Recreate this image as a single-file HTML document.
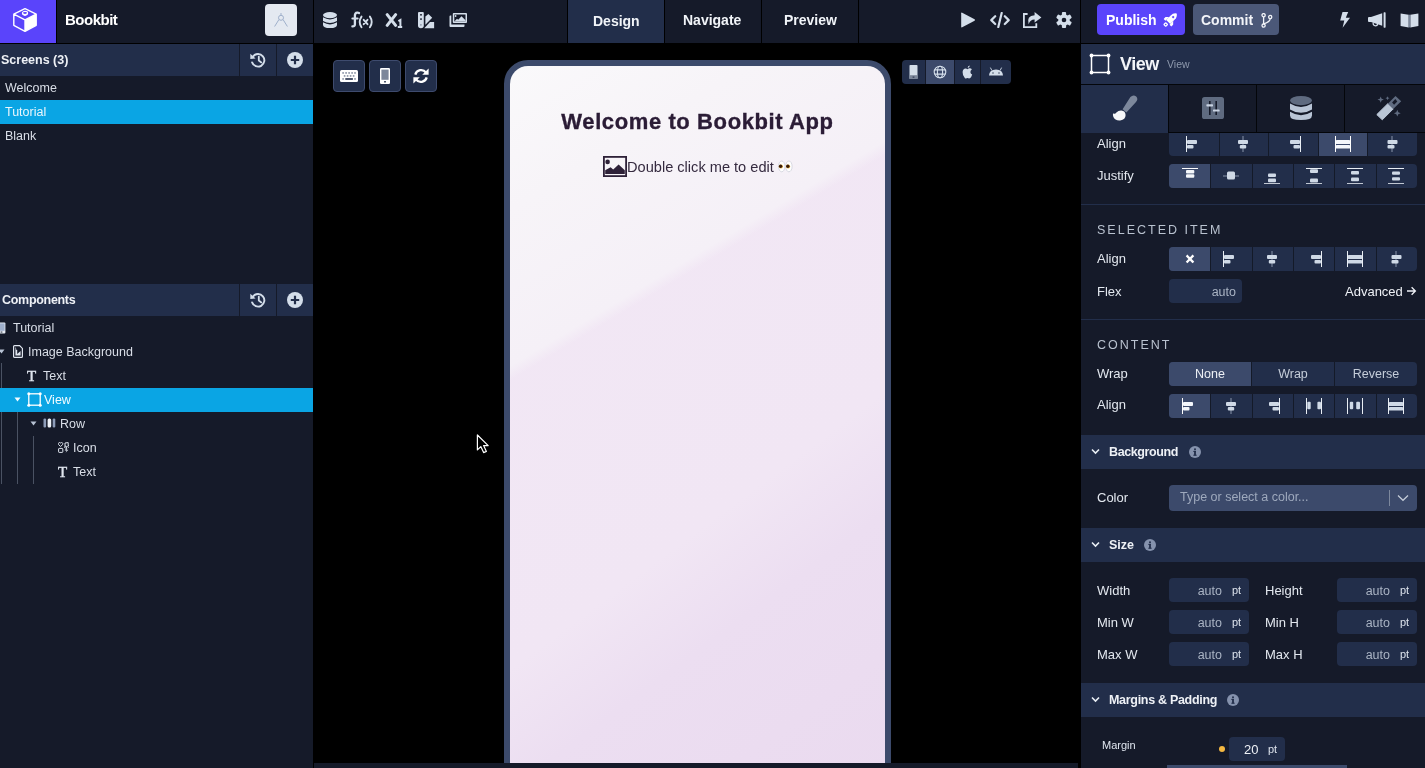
<!DOCTYPE html>
<html><head><meta charset="utf-8">
<style>
*{box-sizing:border-box;margin:0;padding:0}
html,body{width:1425px;height:768px;overflow:hidden;background:#000;font-family:"Liberation Sans",sans-serif;color:#e6ebf2}
.a{position:absolute}
svg{display:block}
#top{left:0;top:0;width:1425px;height:43px;background:#151a29}
#logo{left:0;top:0;width:56px;height:43px;background:#5a44fb}
.vsep{width:1px;background:#000}
.hdr{background:#222e4a}
.txt{white-space:nowrap;line-height:1}
#left{left:0;top:44px;width:313px;height:724px;background:#151a29}
#canvas{left:314px;top:44px;width:767px;height:724px;background:#000}
#right{left:1081px;top:44px;width:344px;height:724px;background:#151a29;overflow:hidden}
.tab{top:0;height:43px;background:#151a29}
.tabtxt{font-weight:bold;font-size:14px;color:#f1f4f8}
.row{font-size:12.5px;color:#d9dee7}
.seg{background:#222e4a;border-radius:4px;overflow:hidden}
.lbl{font-size:13px;color:#e3e8ef}
.sec{font-size:12.5px;letter-spacing:2px;color:#b9c2cf}
.cbtn{width:32px;height:32px;background:#222e4a;border:1px solid #3e4b6e;border-radius:4px}
.inp{background:#222e4a;border-radius:4px}
#root{position:absolute;left:0;top:0;width:1425px;height:768px;overflow:hidden;will-change:transform}
</style></head><body><div id="root">
<!-- TOP BAR -->
<div id="top" class="a"></div>
<div id="logo" class="a"></div>
<div class="a vsep" style="left:56px;top:0;height:43px"></div>
<div class="a txt" style="left:65px;top:12px;font-size:15px;font-weight:bold;color:#fff;letter-spacing:-0.5px">Bookbit</div>
<div class="a" style="left:265px;top:4px;width:32px;height:32px;background:#e4e9f1;border-radius:4px"></div>
<div class="a vsep" style="left:313px;top:0;height:43px"></div>
<div class="a" style="left:0;top:43px;width:1425px;height:1px;background:#000"></div>

<!-- tabs -->
<div class="a vsep" style="left:567px;top:0;height:43px"></div>
<div class="a tab" style="left:568px;width:96px;background:#222e4a"></div>
<div class="a vsep" style="left:664px;top:0;height:43px"></div>
<div class="a vsep" style="left:761px;top:0;height:43px"></div>
<div class="a vsep" style="left:858px;top:0;height:43px"></div>
<div class="a txt tabtxt" style="left:593px;top:14px">Design</div>
<div class="a txt tabtxt" style="left:683px;top:13px">Navigate</div>
<div class="a txt tabtxt" style="left:784px;top:13px">Preview</div>

<div class="a vsep" style="left:1080px;top:0;height:43px"></div>
<div class="a" style="left:1097px;top:4px;width:88px;height:31px;background:#5a44fb;border-radius:4px"></div>
<div class="a txt" style="left:1106px;top:13px;font-size:14px;font-weight:bold;color:#fff">Publish</div>
<div class="a" style="left:1193px;top:4px;width:86px;height:31px;background:#4b5878;border-radius:4px"></div>
<div class="a txt" style="left:1201px;top:13px;font-size:14px;font-weight:bold;color:#f3f5f9">Commit</div>


<!-- logo -->
<svg class="a" style="left:8px;top:4px" width="40" height="32" viewBox="0 0 40 32">
<path d="M17 15.9 L28.2 10.2 L28.2 21.3 L17 27.3 Z" fill="#fff"/>
<path d="M17 4.6 L28.2 10.2 L28.2 21.3 L17 27.3 L5.8 21.3 L5.8 10.2 Z M5.8 10.2 L17 15.9 L28.2 10.2 M17 15.9 L17 27.3" fill="none" stroke="#fff" stroke-width="1.4" stroke-linejoin="round"/>
<ellipse cx="17" cy="9" rx="2.6" ry="1.6" fill="none" stroke="#fff" stroke-width="1.1"/>
<path d="M14.4 9 V10.8 Q17 13 19.6 10.8 V9 Q17 11.2 14.4 9Z" fill="#fff"/>
</svg>
<!-- avatar compass -->
<svg class="a" style="left:265px;top:4px" width="32" height="32" viewBox="0 0 32 32">
<path d="M16 9 V11.3 M13.9 15.6 L9.6 22.5 M18.1 15.6 L22.4 22.5" stroke="#9fb0cb" stroke-width="1" fill="none"/>
<circle cx="16" cy="13.8" r="2.5" fill="none" stroke="#9fb0cb" stroke-width="1"/>
</svg>
<!-- database -->
<svg class="a" style="left:323px;top:12px" width="14" height="16" viewBox="0 0 14 16">
<ellipse cx="7" cy="3.1" rx="7" ry="3.1" fill="#d4deea"/>
<path d="M0 5.3 Q7 9.6 14 5.3 V9 Q7 13.2 0 9 Z" fill="#d4deea"/>
<path d="M0 10.3 Q7 14.6 14 10.3 V12.9 Q14 16 7 16 Q0 16 0 12.9 Z" fill="#d4deea"/>
</svg>
<!-- f(x) -->
<svg class="a" style="left:350px;top:11px" width="24" height="18" viewBox="0 0 24 18">
<path d="M9 2.1 Q8.2 1.6 7.2 1.7 Q4.9 1.9 4.9 4.6 V13.2 Q4.9 15.6 2.4 15.4" fill="none" stroke="#d4deea" stroke-width="2.3" stroke-linecap="round"/>
<path d="M2.4 7.5 H7.6" stroke="#d4deea" stroke-width="2.1" stroke-linecap="round"/>
<path d="M11.5 5.6 Q9.7 8.2 9.7 10.9 Q9.7 13.7 11.5 16.2" fill="none" stroke="#d4deea" stroke-width="1.9" stroke-linecap="round"/>
<path d="M19.9 5.6 Q21.7 8.2 21.7 10.9 Q21.7 13.7 19.9 16.2" fill="none" stroke="#d4deea" stroke-width="1.9" stroke-linecap="round"/>
<path d="M13.7 8.8 L17.5 13.2 M17.5 8.8 L13.7 13.2" stroke="#d4deea" stroke-width="1.9" stroke-linecap="round"/>
</svg>
<!-- X1 -->
<svg class="a" style="left:385px;top:13px" width="18" height="16" viewBox="0 0 18 16">
<path d="M2.2 1.6 L10.6 12.4 M10.6 1.6 L2.2 12.4" stroke="#d4deea" stroke-width="3" stroke-linecap="round"/>
<path d="M13.4 8.2 L15.4 7 V14.2 M12.8 14.1 H17.2" stroke="#d4deea" stroke-width="2" fill="none"/>
</svg>
<!-- swatch -->
<svg class="a" style="left:418px;top:12px" width="17" height="17" viewBox="0 0 17 17">
<path d="M0 1 Q0 0 1 0 H4.8 Q5.8 0 5.8 1 V13.6 Q5.8 16.3 2.9 16.3 Q0 16.3 0 13.6 Z" fill="#d4deea"/>
<rect x="2.2" y="2" width="1.6" height="1.6" fill="#151a29"/>
<rect x="2.2" y="6.3" width="1.6" height="1.6" fill="#151a29"/>
<circle cx="2.9" cy="12.8" r="0.9" fill="#8c97a8"/>
<path d="M7.4 4.4 L10.4 2 L14.2 5.8 L7.4 12.8 Z" fill="#d4deea"/>
<path d="M6.3 16.2 L12 10.1 H16.1 V16.2 Z" fill="#d4deea"/>
</svg>
<!-- images -->
<svg class="a" style="left:449px;top:13px" width="18" height="14" viewBox="0 0 18 14">
<path d="M3.8 0.9 Q3.8 0 4.7 0 H17.1 Q18 0 18 0.9 V9.1 Q18 10 17.1 10 H4.7 Q3.8 10 3.8 9.1 Z M5.3 1.5 V8.5 H16.5 V1.5 Z" fill="#d4deea" fill-rule="evenodd"/>
<circle cx="6.6" cy="3" r="0.9" fill="#d4deea"/>
<path d="M5.3 8.5 L8 5.7 L9.2 6.8 L12.5 3.2 L16.5 7.2 V8.5 Z" fill="#d4deea"/>
<path d="M0.5 3.5 Q0.5 2.6 1.4 2.6 H2.3 V11.6 H15.5 V13 Q15.5 14 14.6 14 H1.4 Q0.5 14 0.5 13.1 Z" fill="#d4deea"/>
</svg>
<!-- play -->
<svg class="a" style="left:960px;top:12px" width="16" height="16" viewBox="0 0 16 16">
<path d="M1.2 1.3 Q1.2 0.2 2.2 0.7 L14.6 7.2 Q15.4 8 14.6 8.8 L2.2 15.3 Q1.2 15.8 1.2 14.7 Z" fill="#d4deea"/>
</svg>
<!-- code -->
<svg class="a" style="left:990px;top:12px" width="20" height="16" viewBox="0 0 20 16">
<path d="M5.2 4.2 L1.3 8.1 L5.2 12 M14.8 4.2 L18.7 8.1 L14.8 12 M11.7 1 L8.3 15" stroke="#d4deea" stroke-width="2.2" fill="none" stroke-linecap="round" stroke-linejoin="round"/>
</svg>
<!-- share -->
<svg class="a" style="left:1023px;top:12px" width="19" height="16" viewBox="0 0 19 16">
<path d="M4.6 2 H0.9 V15.1 H13.3 V11.2" stroke="#d4deea" stroke-width="1.8" fill="none"/>
<path d="M11.6 0 L18.4 5.4 L11.6 10.6 V7.6 Q7.4 7.4 5.6 12.2 Q3.2 3.6 11.6 3.2 Z" fill="#d4deea"/>
</svg>
<!-- gear -->
<svg class="a" style="left:1056px;top:12px" width="16" height="16" viewBox="-8 -8 16 16">
<g fill="#d4deea">
<circle r="5.8"/>
<rect x="-2.1" y="-8" width="4.2" height="16" rx="1"/>
<rect x="-2.1" y="-8" width="4.2" height="16" rx="1" transform="rotate(60)"/>
<rect x="-2.1" y="-8" width="4.2" height="16" rx="1" transform="rotate(120)"/>
</g>
<circle r="2.3" fill="#151a29"/>
</svg>
<!-- rocket -->
<svg class="a" style="left:1158px;top:8px" width="24" height="24" viewBox="0 0 24 24">
<g transform="translate(12.6,11.6) rotate(45)">
<path d="M-2.9 3.4 V-3 Q-2.9 -6.8 0 -8.6 Q2.9 -6.8 2.9 -3 V3.4 Z" fill="#fff"/>
<path d="M-2.9 -0.8 L-5.4 1.8 V4.4 H-2.9 Z M2.9 -0.8 L5.4 1.8 V4.4 H2.9 Z" fill="#fff"/>
<rect x="-1" y="-4.6" width="2" height="2" fill="#5a44fb"/>
<rect x="-1.9" y="5" width="3.8" height="3.8" rx="1" fill="#fff"/>
<circle cx="0" cy="6.9" r="0.8" fill="#5a44fb"/>
</g>
</svg>
<!-- branch -->
<svg class="a" style="left:1261px;top:13px" width="12" height="15" viewBox="0 0 12 15">
<circle cx="2.6" cy="2.2" r="1.6" fill="none" stroke="#f3f5f9" stroke-width="1.3"/>
<circle cx="2.6" cy="12.6" r="1.6" fill="none" stroke="#f3f5f9" stroke-width="1.3"/>
<circle cx="9.2" cy="4" r="1.6" fill="none" stroke="#f3f5f9" stroke-width="1.3"/>
<path d="M2.6 3.8 V11 M9.2 5.6 Q9.2 9 2.8 10.8" fill="none" stroke="#f3f5f9" stroke-width="1.3"/>
</svg>
<!-- bolt -->
<svg class="a" style="left:1339px;top:12px" width="12" height="16" viewBox="0 0 12 16">
<path d="M3.5 0 H9.2 L6.8 5.8 H11 L3.6 15.8 L5.3 8.6 H1.2 Z" fill="#d4deea"/>
</svg>
<!-- megaphone -->
<svg class="a" style="left:1368px;top:12px" width="19" height="16" viewBox="0 0 19 16">
<path d="M0 6 Q0 5 1 5 H3 L14.2 1.3 V13.7 L3 10 H1 Q0 10 0 9 Z" fill="#d4deea"/>
<rect x="15.6" y="0.3" width="2" height="15.4" rx="0.6" fill="#d4deea"/>
<path d="M5.2 10.5 Q4.8 13.8 7.5 13.8 Q9.4 13.8 9.7 11.8" fill="none" stroke="#d4deea" stroke-width="1.3"/>
</svg>
<!-- book -->
<svg class="a" style="left:1400px;top:12px" width="19" height="16" viewBox="0 0 19 16">
<path d="M0.6 1.4 L8.7 2.7 V15.4 L0.6 13.9 Z" fill="#d4deea"/>
<path d="M18.4 1.4 L10.3 2.7 V15.4 L18.4 13.9 Z" fill="#d4deea"/>
<rect x="8.7" y="2.7" width="1.6" height="12.7" fill="#7b879b"/>
</svg>

<!-- LEFT PANEL -->
<div id="left" class="a"></div>
<div class="a hdr" style="left:0;top:44px;width:313px;height:32px"></div>
<div class="a vsep" style="left:239px;top:44px;height:32px;background:#151a29"></div>
<div class="a vsep" style="left:276px;top:44px;height:32px;background:#151a29"></div>
<div class="a txt" style="left:1px;top:54px;font-size:12.5px;font-weight:bold;color:#eef1f6">Screens (3)</div>
<div class="a txt row" style="left:5px;top:82px">Welcome</div>
<div class="a" style="left:0;top:100px;width:313px;height:24px;background:#0aa5e4"></div>
<div class="a txt row" style="left:5px;top:106px;color:#eaf6fc">Tutorial</div>
<div class="a txt row" style="left:5px;top:130px">Blank</div>

<div class="a hdr" style="left:0;top:284px;width:313px;height:32px"></div>
<div class="a vsep" style="left:239px;top:284px;height:32px;background:#151a29"></div>
<div class="a vsep" style="left:276px;top:284px;height:32px;background:#151a29"></div>
<div class="a txt" style="left:2px;top:294px;font-size:12.5px;font-weight:bold;color:#eef1f6;letter-spacing:-0.3px">Components</div>

<svg class="a" style="left:250px;top:52px" width="16" height="16" viewBox="0 0 16 16">
<path d="M3.2 4.3 A6.3 6.3 0 1 1 2.1 10.4" fill="none" stroke="#d4deea" stroke-width="1.9" stroke-linecap="round"/>
<path d="M0.3 1.8 L5.6 6.4 L0.3 6.9 Z" fill="#d4deea"/>
<path d="M8.8 4.6 V8.6 L11.3 10.4" fill="none" stroke="#d4deea" stroke-width="1.8" stroke-linecap="round" stroke-linejoin="round"/>
</svg>
<svg class="a" style="left:287px;top:52px" width="16" height="16" viewBox="0 0 16 16">
<circle cx="8" cy="8" r="8" fill="#d4deea"/>
<path d="M8 3.8 V12.2 M3.8 8 H12.2" stroke="#222e4a" stroke-width="2.2"/>
</svg><svg class="a" style="left:250px;top:292px" width="16" height="16" viewBox="0 0 16 16">
<path d="M3.2 4.3 A6.3 6.3 0 1 1 2.1 10.4" fill="none" stroke="#d4deea" stroke-width="1.9" stroke-linecap="round"/>
<path d="M0.3 1.8 L5.6 6.4 L0.3 6.9 Z" fill="#d4deea"/>
<path d="M8.8 4.6 V8.6 L11.3 10.4" fill="none" stroke="#d4deea" stroke-width="1.8" stroke-linecap="round" stroke-linejoin="round"/>
</svg>
<svg class="a" style="left:287px;top:292px" width="16" height="16" viewBox="0 0 16 16">
<circle cx="8" cy="8" r="8" fill="#d4deea"/>
<path d="M8 3.8 V12.2 M3.8 8 H12.2" stroke="#222e4a" stroke-width="2.2"/>
</svg>
<!-- tree -->
<div class="a" style="left:1px;top:363px;width:1px;height:121px;background:#4a5263"></div>
<div class="a" style="left:0;top:388px;width:313px;height:24px;background:#0aa5e4"></div>
<div class="a" style="left:17px;top:412px;width:1px;height:72px;background:#4a5263"></div>
<div class="a" style="left:33px;top:436px;width:1px;height:48px;background:#4a5263"></div>

<svg class="a" style="left:-3px;top:322px" width="9" height="12" viewBox="0 0 9 12">
<rect x="0.6" y="0.6" width="7.8" height="10.8" rx="1" fill="#e5ebf3"/>
<rect x="1.4" y="1.4" width="6.2" height="7.4" fill="#9fb0cc"/>
<rect x="3.6" y="9.6" width="1.8" height="0.9" fill="#151a29"/>
</svg>
<div class="a txt row" style="left:13px;top:322px">Tutorial</div>

<svg class="a" style="left:-2px;top:349px" width="7" height="5" viewBox="0 0 7 5"><path d="M0.5 0.5 H6.5 L3.5 4.5Z" fill="#b7c2d4"/></svg>
<svg class="a" style="left:13px;top:345px" width="10" height="13" viewBox="0 0 10 13">
<path d="M1.5 0.6 H6.6 L9.4 3.4 V11.4 Q9.4 12.4 8.4 12.4 H1.6 Q0.6 12.4 0.6 11.4 V1.6 Q0.6 0.6 1.5 0.6Z" fill="none" stroke="#dfe5ee" stroke-width="1.2"/>
<path d="M2.4 2 V10.6 H7.6 V6 L4.2 9 V5 Z" fill="#dfe5ee"/>
<circle cx="3.6" cy="4" r="0.8" fill="#151a29"/>
</svg>
<div class="a txt row" style="left:28px;top:346px">Image Background</div>

<div class="a" style="left:27px;top:369px;font-family:'Liberation Serif',serif;font-size:15px;color:#dfe5ee;line-height:1;-webkit-text-stroke:0.45px #dfe5ee">T</div>
<div class="a txt row" style="left:43px;top:370px">Text</div>

<svg class="a" style="left:14px;top:397px" width="7" height="5" viewBox="0 0 7 5"><path d="M0.5 0.5 H6.5 L3.5 4.5Z" fill="#f2fbff"/></svg>
<svg class="a" style="left:27px;top:392px" width="15" height="15" viewBox="0 0 15 15">
<rect x="1.8" y="1.8" width="11.4" height="11.4" fill="none" stroke="#fff" stroke-width="1.3"/>
<circle cx="1.8" cy="1.8" r="1.5" fill="#fff"/><circle cx="13.2" cy="1.8" r="1.5" fill="#fff"/>
<circle cx="1.8" cy="13.2" r="1.5" fill="#fff"/><circle cx="13.2" cy="13.2" r="1.5" fill="#fff"/>
</svg>
<div class="a txt row" style="left:44px;top:394px;color:#f2fbff">View</div>

<svg class="a" style="left:30px;top:421px" width="7" height="5" viewBox="0 0 7 5"><path d="M0.5 0.5 H6.5 L3.5 4.5Z" fill="#b7c2d4"/></svg>
<svg class="a" style="left:43px;top:418px" width="13" height="10" viewBox="0 0 13 10">
<rect x="0.5" y="0.5" width="2.6" height="9" rx="1.1" fill="#8d9cb8"/>
<rect x="4.6" y="0.5" width="3.6" height="9" rx="1.5" fill="#eef2f7"/>
<rect x="9.7" y="0.5" width="2.6" height="9" rx="1.1" fill="#8d9cb8"/>
</svg>
<div class="a txt row" style="left:60px;top:418px">Row</div>

<svg class="a" style="left:58px;top:442px" width="11" height="11" viewBox="0 0 11 11">
<path d="M2.6 4.5 L0.6 2.6 Q0 1.6 0.8 0.8 Q1.8 0 2.6 1 Q3.4 0 4.4 0.8 Q5.2 1.6 4.6 2.6 Z" fill="none" stroke="#dfe5ee" stroke-width="1"/>
<path d="M7 4.6 V1 L10.2 0.6 V3.6 M7 4.3 A1 1 0 1 1 6.9 4.4 M10.2 3.6 A1 1 0 1 1 10.1 3.7" fill="none" stroke="#dfe5ee" stroke-width="1"/>
<rect x="0.6" y="6.4" width="4.2" height="4" rx="0.6" fill="none" stroke="#dfe5ee" stroke-width="1"/>
<path d="M8.6 6 L6.6 8.6 H8.6 L7.6 10.8 L10.4 7.8 H8.6 L9.4 6Z" fill="#dfe5ee"/>
</svg>
<div class="a txt row" style="left:73px;top:442px">Icon</div>

<div class="a" style="left:58px;top:465px;font-family:'Liberation Serif',serif;font-size:15px;color:#dfe5ee;line-height:1;-webkit-text-stroke:0.45px #dfe5ee">T</div>
<div class="a txt row" style="left:73px;top:466px">Text</div>

<!-- CANVAS -->
<div id="canvas" class="a"></div>


<!-- canvas buttons -->
<div class="a cbtn" style="left:333px;top:60px"></div>
<div class="a cbtn" style="left:369px;top:60px"></div>
<div class="a cbtn" style="left:405px;top:60px"></div>
<svg class="a" style="left:340px;top:70px" width="18" height="12" viewBox="0 0 18 12">
<rect x="0" y="0" width="18" height="12" rx="1.5" fill="#fff"/>
<g fill="#7c879b"><rect x="2.3" y="2.2" width="1.6" height="1.5"/><rect x="5.3" y="2.2" width="1.6" height="1.5"/><rect x="8.3" y="2.2" width="1.6" height="1.5"/><rect x="11.3" y="2.2" width="1.6" height="1.5"/><rect x="14.2" y="2.2" width="1.6" height="1.5"/>
<rect x="3.8" y="5.2" width="1.6" height="1.5"/><rect x="6.8" y="5.2" width="1.6" height="1.5"/><rect x="9.8" y="5.2" width="1.6" height="1.5"/><rect x="12.8" y="5.2" width="1.6" height="1.5"/>
<rect x="2.3" y="8.2" width="1.6" height="1.5"/><rect x="14.2" y="8.2" width="1.6" height="1.5"/></g>
<rect x="5.3" y="8.2" width="7.6" height="1.6" fill="#222e4a"/>
</svg>
<svg class="a" style="left:380px;top:68px" width="10" height="16" viewBox="0 0 10 16">
<rect x="0" y="0" width="10" height="16" rx="1.3" fill="#fff"/>
<rect x="1.4" y="1.6" width="7.2" height="10.2" fill="#7c879b"/>
<rect x="4.2" y="13" width="1.6" height="1.5" fill="#222e4a"/>
</svg>
<svg class="a" style="left:413px;top:68px" width="16" height="16" viewBox="0 0 16 16">
<path d="M2.3 6.6 A6 6 0 0 1 13 4.6" fill="none" stroke="#fff" stroke-width="2.3"/>
<path d="M15.6 0.4 V6.8 H9.2 Z" fill="#fff"/>
<path d="M13.7 9.4 A6 6 0 0 1 3 11.4" fill="none" stroke="#fff" stroke-width="2.3"/>
<path d="M0.4 15.6 V9.2 H6.8 Z" fill="#fff"/>
</svg>

<!-- phone -->
<div class="a" style="left:504px;top:60px;width:387px;height:740px;border:6px solid #3c4a6b;border-radius:24px;background:#3c4a6b"></div>
<div class="a" id="screen" style="left:510px;top:66px;width:375px;height:728px;border-radius:18px 18px 0 0;overflow:hidden;background:linear-gradient(149deg,#faf9fb 0%,#f7f4f8 15%,#f5f0f7 31.5%,rgba(242,232,245,0) 33%),linear-gradient(143.5deg,#f2e8f5 0%,#f1e6f4 60%,#ecdef1 72%,#eadaef 100%)">
<div class="a txt" style="left:0;width:375px;top:45px;text-align:center;font-size:22px;letter-spacing:0.6px;font-weight:bold;color:#2b1c36;-webkit-text-stroke:0.35px #2b1c36">Welcome to Bookbit App</div>
</div>
<svg class="a" style="left:603px;top:156px" width="24" height="21" viewBox="0 0 24 21">
<rect x="0.9" y="0.9" width="22.2" height="19.2" fill="none" stroke="#2e2138" stroke-width="1.8"/>
<circle cx="4.6" cy="5.9" r="2.3" fill="#2e2138"/>
<path d="M2.2 18 V14.2 L7.6 11.2 L10.2 13.4 L15.6 8.4 L21.8 14.2 V18 Z" fill="#2e2138"/>
</svg>
<div class="a txt" style="left:627px;top:160px;font-size:14.6px;color:#352a3f">Double click me to edit</div>
<svg class="a" style="left:778px;top:160px" width="16" height="13" viewBox="0 0 16 13">
<ellipse cx="3.7" cy="6.4" rx="3.2" ry="5.4" fill="#fff" stroke="#c8ccd6" stroke-width="0.7"/>
<ellipse cx="10.9" cy="6.4" rx="3.2" ry="5.4" fill="#fff" stroke="#c8ccd6" stroke-width="0.7"/>
<circle cx="2.9" cy="6.5" r="2.1" fill="#e8b84a"/><circle cx="2.6" cy="6.2" r="1.7" fill="#3a1c08"/>
<circle cx="10.1" cy="6.5" r="2.1" fill="#e8b84a"/><circle cx="9.8" cy="6.2" r="1.7" fill="#3a1c08"/>
</svg>

<!-- platform switcher -->
<div class="a" style="left:902px;top:60px;width:109px;height:24px;background:#222e4a;border-radius:4px;overflow:hidden">
<div class="a" style="left:23px;top:0;width:1px;height:24px;background:#151a29"></div>
<div class="a" style="left:24px;top:0;width:28px;height:24px;background:#3c4a6b"></div>
<div class="a" style="left:52px;top:0;width:1px;height:24px;background:#151a29"></div>
<div class="a" style="left:78px;top:0;width:1px;height:24px;background:#151a29"></div>
</div>
<svg class="a" style="left:909px;top:65px" width="9" height="14" viewBox="0 0 9 14">
<rect x="0.5" y="0" width="8" height="14" rx="0.8" fill="#d4deea"/>
<rect x="0.5" y="10.2" width="8" height="3.8" fill="#7c879b"/>
<rect x="3.6" y="11.6" width="1.8" height="1" fill="#222e4a"/>
</svg>
<svg class="a" style="left:933px;top:65px" width="14" height="14" viewBox="0 0 14 14">
<g fill="none" stroke="#d4deea" stroke-width="1.1">
<circle cx="7" cy="7" r="5.8"/><ellipse cx="7" cy="7" rx="2.6" ry="5.8"/>
<path d="M1.6 4.9 H12.4 M1.6 9.1 H12.4"/></g>
</svg>
<svg class="a" style="left:962px;top:65px" width="11" height="14" viewBox="0 0 11 14">
<path d="M5.5 4.2 Q7.2 2.6 9 3.6 Q9.6 4 9.8 4.4 Q8.2 5.3 8.4 7.2 Q8.6 8.9 10.2 9.5 Q9.4 12 8.2 13 Q7.4 13.7 6.4 13.3 Q5.5 12.9 4.6 13.3 Q3.6 13.7 2.8 12.9 Q0.4 10.4 0.6 7.1 Q0.9 3.5 3.6 3.5 Q4.6 3.6 5.5 4.2Z" fill="#d4deea"/>
<path d="M5.6 3.1 Q5.7 0.9 7.8 0.5 Q7.7 2.7 5.6 3.1Z" fill="#d4deea"/>
</svg>
<svg class="a" style="left:988px;top:66px" width="16" height="12" viewBox="0 0 16 12">
<path d="M1 9.6 Q1.3 3.4 8 3.4 Q14.7 3.4 15 9.6 Z" fill="#d4deea"/>
<path d="M3.8 4.4 L2.4 1.6 M12.2 4.4 L13.6 1.6" stroke="#d4deea" stroke-width="0.9"/>
<circle cx="5" cy="7" r="0.7" fill="#222e4a"/><circle cx="11" cy="7" r="0.7" fill="#222e4a"/>
</svg>

<!-- cursor -->
<svg class="a" style="left:475px;top:433px" width="16" height="22" viewBox="0 0 16 22">
<path d="M2.4 2 V16.9 L5.8 13.6 L8.6 19.6 L11.4 18.4 L8.6 12.6 H13.2 Z" fill="#000" stroke="#fff" stroke-width="1.2" stroke-linejoin="round"/>
</svg>

<!-- RIGHT PANEL -->
<div id="right" class="a"></div>
<!-- RSTART -->
<div class="a hdr" style="left:1081px;top:44px;width:344px;height:40px"></div>
<div class="a" style="left:1081px;top:84px;width:344px;height:1px;background:#04060a"></div>
<svg class="a" style="left:1089px;top:53px" width="22" height="22" viewBox="0 0 22 22">
<rect x="2.5" y="2.5" width="17" height="17" fill="none" stroke="#fff" stroke-width="1.5"/>
<circle cx="2.5" cy="2.5" r="1.9" fill="#fff"/><circle cx="19.5" cy="2.5" r="1.9" fill="#fff"/>
<circle cx="2.5" cy="19.5" r="1.9" fill="#fff"/><circle cx="19.5" cy="19.5" r="1.9" fill="#fff"/></svg>
<div class="a txt" style="left:1120px;top:55px;font-size:18px;font-weight:bold;color:#f3f5f9;letter-spacing:-0.5px">View</div>
<div class="a txt" style="left:1167px;top:59px;font-size:10.5px;color:#8e99ad">View</div>
<div class="a" style="left:1081px;top:85px;width:87px;height:48px;background:#222e4a"></div>
<div class="a" style="left:1168px;top:85px;width:1px;height:48px;background:#04060a"></div>
<div class="a" style="left:1256px;top:85px;width:1px;height:48px;background:#04060a"></div>
<div class="a" style="left:1344px;top:85px;width:1px;height:48px;background:#04060a"></div>
<div class="a" style="left:1169px;top:132px;width:256px;height:1px;background:#04060a"></div>
<svg class="a" style="left:1105px;top:90px" width="40" height="35" viewBox="0 0 40 35">
<path d="M25.4 7 Q28.4 4 31.2 6.6 Q33.6 9.2 31 12 L21.4 22.4 L17.6 19.2 Z" fill="#7d889c"/>
<path d="M8 23.2 Q9.8 24.8 11.4 22.6 Q13.4 20.2 16.4 20.4 Q20.4 20.8 20.6 25 Q20.6 29.8 15.2 30.4 Q10 30.8 8.4 27 Q7.7 25.1 8 23.2Z" fill="#f6f7f9"/>
</svg>
<svg class="a" style="left:1202px;top:97px" width="22" height="22" viewBox="0 0 22 22">
<rect x="0" y="0" width="22" height="22" rx="2.6" fill="#5f6b80"/>
<rect x="7" y="4" width="1.6" height="14" fill="#151a29"/>
<rect x="13.4" y="4" width="1.6" height="14" fill="#151a29"/>
<rect x="4.4" y="7.2" width="6.6" height="2.2" rx="0.6" fill="#c9d3e2"/>
<rect x="11" y="12.4" width="6.6" height="2.2" rx="0.6" fill="#c9d3e2"/>
</svg>
<svg class="a" style="left:1290px;top:96px" width="22" height="24" viewBox="0 0 22 24">
<ellipse cx="11" cy="4.6" rx="11" ry="4.6" fill="#5f6b80"/>
<path d="M0 7.6 Q11 14.4 22 7.6 V13.4 Q11 20.2 0 13.4Z" fill="#b9c5d6"/>
<path d="M0 15.8 Q11 22.6 22 15.8 V19.4 Q22 24 11 24 Q0 24 0 19.4Z" fill="#b9c5d6"/>
</svg>
<svg class="a" style="left:1370px;top:90px" width="40" height="35" viewBox="0 0 40 35">
<path d="M6.8 24.6 L12.3 29.8 L23.2 18.9 L17.8 13.7 Z" fill="#bac6d6" stroke="#bac6d6" stroke-width="1" stroke-linejoin="round"/>
<path d="M17.8 13.7 L23.2 18.9 L31.2 11.2 L25.5 5.9 Z M22.1 12.5 L24.1 14.8 L27.3 11.6 L25.3 9.1 Z" fill="#5f6b80" fill-rule="evenodd"/>
<path d="M10.7 6.4 L11.6 8.7 L13.9 9.6 L11.6 10.5 L10.7 12.8 L9.8 10.5 L7.5 9.6 L9.8 8.7Z" fill="#5f6b80"/>
<path d="M17.5 6.2 L18.1 7.6 L19.5 8.2 L18.1 8.8 L17.5 10.2 L16.9 8.8 L15.5 8.2 L16.9 7.6Z" fill="#5f6b80"/>
<path d="M27.3 19.8 L28.3 22.2 L30.7 23.2 L28.3 24.2 L27.3 26.6 L26.3 24.2 L23.9 23.2 L26.3 22.2Z" fill="#5f6b80"/>
</svg>
<div class="a txt lbl" style="left:1097px;top:137px;">Align</div>
<div class="a" style="left:1169px;top:133px;width:248px;height:23px;background:#222e4a;border-radius:0 0 4px 4px;overflow:hidden">
<div class="a" style="left:50px;top:0;width:1px;height:23px;background:#141a28"></div>
<div class="a" style="left:99px;top:0;width:1px;height:23px;background:#141a28"></div>
<div class="a" style="left:149px;top:0;width:49px;height:23px;background:#3c4a6b"></div>
<div class="a" style="left:149px;top:0;width:1px;height:23px;background:#141a28"></div>
<div class="a" style="left:198px;top:0;width:1px;height:23px;background:#141a28"></div>
</div>
<svg class="a" style="left:1185.8px;top:135.6px" width="16" height="16" viewBox="0 0 16 16"><rect x="0" y="0" width="1" height="16" rx="0" fill="#e9eef4"/><rect x="1" y="4" width="10" height="4" rx="1" fill="#cfd9e6"/><rect x="1" y="9" width="6.5" height="3.6" rx="1" fill="#cfd9e6"/></svg>
<svg class="a" style="left:1235.4px;top:135.6px" width="16" height="16" viewBox="0 0 16 16"><rect x="7.5" y="0" width="1" height="16" rx="0" fill="#8894aa"/><rect x="3" y="4" width="10" height="4" rx="1" fill="#cfd9e6"/><rect x="4.8" y="9" width="6.4" height="3.6" rx="1" fill="#cfd9e6"/></svg>
<svg class="a" style="left:1285.0px;top:135.6px" width="16" height="16" viewBox="0 0 16 16"><rect x="15" y="0" width="1" height="16" rx="0" fill="#e9eef4"/><rect x="5" y="4" width="10" height="4" rx="1" fill="#cfd9e6"/><rect x="8.5" y="9" width="6.5" height="3.6" rx="1" fill="#cfd9e6"/></svg>
<svg class="a" style="left:1334.6px;top:135.6px" width="16" height="16" viewBox="0 0 16 16"><rect x="0" y="0" width="1" height="16" rx="0" fill="#ffffff"/><rect x="15" y="0" width="1" height="16" rx="0" fill="#ffffff"/><rect x="1" y="4" width="14" height="4" rx="0.5" fill="#f4f7fb"/><rect x="1" y="9" width="14" height="3.6" rx="0.5" fill="#f4f7fb"/></svg>
<svg class="a" style="left:1384.2px;top:135.6px" width="16" height="16" viewBox="0 0 16 16"><rect x="7.5" y="0" width="1" height="16" rx="0" fill="#8894aa"/><rect x="3.5" y="4" width="10" height="4" rx="1" fill="#cfd9e6"/><rect x="3.5" y="9" width="7" height="3.6" rx="1" fill="#cfd9e6"/></svg>
<div class="a txt lbl" style="left:1097px;top:169px;">Justify</div>
<div class="a" style="left:1169px;top:164px;width:248px;height:24px;background:#222e4a;border-radius:4px;overflow:hidden">
<div class="a" style="left:0px;top:0;width:41px;height:24px;background:#3c4a6b"></div>
<div class="a" style="left:41px;top:0;width:1px;height:24px;background:#141a28"></div>
<div class="a" style="left:83px;top:0;width:1px;height:24px;background:#141a28"></div>
<div class="a" style="left:124px;top:0;width:1px;height:24px;background:#141a28"></div>
<div class="a" style="left:165px;top:0;width:1px;height:24px;background:#141a28"></div>
<div class="a" style="left:207px;top:0;width:1px;height:24px;background:#141a28"></div>
</div>
<svg class="a" style="left:1181.7px;top:168.0px" width="16" height="16" viewBox="0 0 16 16"><rect x="0" y="0" width="16" height="1" rx="0" fill="#ffffff"/><rect x="4" y="2" width="8.3" height="3.4" rx="1" fill="#f4f7fb"/><rect x="4" y="6.3" width="8.3" height="3.5" rx="1" fill="#f4f7fb"/></svg>
<svg class="a" style="left:1223.0px;top:168.0px" width="16" height="16" viewBox="0 0 16 16"><rect x="0" y="7.5" width="16" height="1" rx="0" fill="#8894aa"/><rect x="4" y="3.5" width="8" height="8" rx="1.5" fill="#cfd9e6"/></svg>
<svg class="a" style="left:1264.3px;top:168.0px" width="16" height="16" viewBox="0 0 16 16"><rect x="0" y="15.2" width="16" height="1" rx="0" fill="#e9eef4"/><rect x="4" y="5.5" width="8" height="3.6" rx="1" fill="#cfd9e6"/><rect x="4" y="10.5" width="8" height="3.8" rx="1" fill="#cfd9e6"/></svg>
<svg class="a" style="left:1305.7px;top:168.0px" width="16" height="16" viewBox="0 0 16 16"><rect x="0" y="0" width="16" height="1" rx="0" fill="#e9eef4"/><rect x="0" y="15.2" width="16" height="1" rx="0" fill="#e9eef4"/><rect x="4" y="1.2" width="8" height="3.8" rx="1" fill="#cfd9e6"/><rect x="4" y="10.6" width="8" height="3.8" rx="1" fill="#cfd9e6"/></svg>
<svg class="a" style="left:1347.0px;top:168.0px" width="16" height="16" viewBox="0 0 16 16"><rect x="0" y="0" width="16" height="1" rx="0" fill="#e9eef4"/><rect x="0" y="15.2" width="16" height="1" rx="0" fill="#e9eef4"/><rect x="4" y="3" width="8" height="3.4" rx="1" fill="#cfd9e6"/><rect x="4" y="9.6" width="8" height="3.6" rx="1" fill="#cfd9e6"/></svg>
<svg class="a" style="left:1388.3px;top:168.0px" width="16" height="16" viewBox="0 0 16 16"><rect x="0" y="0" width="16" height="1" rx="0" fill="#e9eef4"/><rect x="0" y="15.2" width="16" height="1" rx="0" fill="#e9eef4"/><rect x="4" y="3.4" width="8" height="3.4" rx="1" fill="#cfd9e6"/><rect x="4" y="9.2" width="8" height="3.4" rx="1" fill="#cfd9e6"/></svg>
<div class="a" style="left:1081px;top:204px;width:344px;height:1px;background:#222e4a"></div>
<div class="a txt sec" style="left:1097px;top:224px">SELECTED ITEM</div>
<div class="a txt lbl" style="left:1097px;top:252px;">Align</div>
<div class="a" style="left:1169px;top:247px;width:248px;height:24px;background:#222e4a;border-radius:4px;overflow:hidden">
<div class="a" style="left:0px;top:0;width:41px;height:24px;background:#3c4a6b"></div>
<div class="a" style="left:41px;top:0;width:1px;height:24px;background:#141a28"></div>
<div class="a" style="left:83px;top:0;width:1px;height:24px;background:#141a28"></div>
<div class="a" style="left:124px;top:0;width:1px;height:24px;background:#141a28"></div>
<div class="a" style="left:165px;top:0;width:1px;height:24px;background:#141a28"></div>
<div class="a" style="left:207px;top:0;width:1px;height:24px;background:#141a28"></div>
</div>
<svg class="a" style="left:1181.7px;top:251.0px" width="16" height="16" viewBox="0 0 16 16"><path d="M5.4 5.2 L10.6 10.6 M10.6 5.2 L5.4 10.6" stroke="#fff" stroke-width="2.3" stroke-linecap="square"/></svg>
<svg class="a" style="left:1223.0px;top:251.0px" width="16" height="16" viewBox="0 0 16 16"><rect x="0" y="0" width="1" height="16" rx="0" fill="#e9eef4"/><rect x="1" y="4" width="10" height="4" rx="1" fill="#cfd9e6"/><rect x="1" y="9" width="6.5" height="3.6" rx="1" fill="#cfd9e6"/></svg>
<svg class="a" style="left:1264.3px;top:251.0px" width="16" height="16" viewBox="0 0 16 16"><rect x="7.5" y="0" width="1" height="16" rx="0" fill="#8894aa"/><rect x="3" y="4" width="10" height="4" rx="1" fill="#cfd9e6"/><rect x="4.8" y="9" width="6.4" height="3.6" rx="1" fill="#cfd9e6"/></svg>
<svg class="a" style="left:1305.7px;top:251.0px" width="16" height="16" viewBox="0 0 16 16"><rect x="15" y="0" width="1" height="16" rx="0" fill="#e9eef4"/><rect x="5" y="4" width="10" height="4" rx="1" fill="#cfd9e6"/><rect x="8.5" y="9" width="6.5" height="3.6" rx="1" fill="#cfd9e6"/></svg>
<svg class="a" style="left:1347.0px;top:251.0px" width="16" height="16" viewBox="0 0 16 16"><rect x="0" y="0" width="1" height="16" rx="0" fill="#e9eef4"/><rect x="15" y="0" width="1" height="16" rx="0" fill="#e9eef4"/><rect x="1" y="4" width="14" height="4" rx="0.5" fill="#cfd9e6"/><rect x="1" y="9" width="14" height="3.6" rx="0.5" fill="#cfd9e6"/></svg>
<svg class="a" style="left:1388.3px;top:251.0px" width="16" height="16" viewBox="0 0 16 16"><rect x="7.5" y="0" width="1" height="16" rx="0" fill="#8894aa"/><rect x="3.5" y="4" width="10" height="4" rx="1" fill="#cfd9e6"/><rect x="3.5" y="9" width="7" height="3.6" rx="1" fill="#cfd9e6"/></svg>
<div class="a txt lbl" style="left:1097px;top:285px;">Flex</div>
<div class="a inp" style="left:1169px;top:279px;width:73px;height:24px"></div><div class="a txt" style="left:1169px;width:67px;top:286px;text-align:right;font-size:12.5px;color:#aab4c4">auto</div>
<div class="a txt lbl" style="left:1345px;top:285px;color:#eef1f6">Advanced</div>
<svg class="a" style="left:1406px;top:286px" width="11" height="10" viewBox="0 0 11 10"><path d="M1 5 H9.4 M5.6 1.2 L9.4 5 L5.6 8.8" fill="none" stroke="#eef1f6" stroke-width="1.3"/></svg>
<div class="a" style="left:1081px;top:319px;width:344px;height:1px;background:#222e4a"></div>
<div class="a txt sec" style="left:1097px;top:339px">CONTENT</div>
<div class="a txt lbl" style="left:1097px;top:367px;">Wrap</div>
<div class="a seg" style="left:1169px;top:362px;width:248px;height:24px"><div class="a" style="left:0;top:0;width:82px;height:24px;background:#3c4a6b"></div><div class="a" style="left:82px;top:0;width:1px;height:24px;background:#141a28"></div><div class="a" style="left:165px;top:0;width:1px;height:24px;background:#141a28"></div></div>
<div class="a txt" style="left:1169px;width:82px;top:368px;text-align:center;font-size:12.5px;color:#eef1f6">None</div>
<div class="a txt" style="left:1252px;width:82px;top:368px;text-align:center;font-size:12.5px;color:#c5cdd9">Wrap</div>
<div class="a txt" style="left:1335px;width:82px;top:368px;text-align:center;font-size:12.5px;color:#c5cdd9">Reverse</div>
<div class="a txt lbl" style="left:1097px;top:398px;">Align</div>
<div class="a" style="left:1169px;top:394px;width:248px;height:24px;background:#222e4a;border-radius:4px;overflow:hidden">
<div class="a" style="left:0px;top:0;width:41px;height:24px;background:#3c4a6b"></div>
<div class="a" style="left:41px;top:0;width:1px;height:24px;background:#141a28"></div>
<div class="a" style="left:83px;top:0;width:1px;height:24px;background:#141a28"></div>
<div class="a" style="left:124px;top:0;width:1px;height:24px;background:#141a28"></div>
<div class="a" style="left:165px;top:0;width:1px;height:24px;background:#141a28"></div>
<div class="a" style="left:207px;top:0;width:1px;height:24px;background:#141a28"></div>
</div>
<svg class="a" style="left:1181.7px;top:398.0px" width="16" height="16" viewBox="0 0 16 16"><rect x="0" y="0" width="1" height="16" rx="0" fill="#ffffff"/><rect x="1" y="4" width="10" height="4" rx="1" fill="#f4f7fb"/><rect x="1" y="9" width="6.5" height="3.6" rx="1" fill="#f4f7fb"/></svg>
<svg class="a" style="left:1223.0px;top:398.0px" width="16" height="16" viewBox="0 0 16 16"><rect x="7.5" y="0" width="1" height="16" rx="0" fill="#8894aa"/><rect x="3" y="4" width="10" height="4" rx="1" fill="#cfd9e6"/><rect x="4.8" y="9" width="6.4" height="3.6" rx="1" fill="#cfd9e6"/></svg>
<svg class="a" style="left:1264.3px;top:398.0px" width="16" height="16" viewBox="0 0 16 16"><rect x="15" y="0" width="1" height="16" rx="0" fill="#e9eef4"/><rect x="5" y="4" width="10" height="4" rx="1" fill="#cfd9e6"/><rect x="8.5" y="9" width="6.5" height="3.6" rx="1" fill="#cfd9e6"/></svg>
<svg class="a" style="left:1305.7px;top:398.0px" width="16" height="16" viewBox="0 0 16 16"><rect x="0" y="0" width="1" height="16" rx="0" fill="#e9eef4"/><rect x="15" y="0" width="1" height="16" rx="0" fill="#e9eef4"/><rect x="1.3" y="3.8" width="3.4" height="7.4" rx="1" fill="#cfd9e6"/><rect x="11.4" y="3.8" width="3.6" height="7.4" rx="1" fill="#cfd9e6"/></svg>
<svg class="a" style="left:1347.0px;top:398.0px" width="16" height="16" viewBox="0 0 16 16"><rect x="0" y="0" width="1" height="16" rx="0" fill="#e9eef4"/><rect x="15" y="0" width="1" height="16" rx="0" fill="#e9eef4"/><rect x="2.8" y="3.8" width="3.4" height="7.4" rx="1" fill="#cfd9e6"/><rect x="9.2" y="3.8" width="3.8" height="7.4" rx="1" fill="#cfd9e6"/></svg>
<svg class="a" style="left:1388.3px;top:398.0px" width="16" height="16" viewBox="0 0 16 16"><rect x="0" y="0" width="1" height="16" rx="0" fill="#e9eef4"/><rect x="15" y="0" width="1" height="16" rx="0" fill="#e9eef4"/><rect x="1" y="4" width="14" height="4" rx="0.5" fill="#cfd9e6"/><rect x="1" y="9" width="14" height="3.6" rx="0.5" fill="#cfd9e6"/></svg>
<div class="a hdr" style="left:1081px;top:435px;width:344px;height:34px"></div><svg class="a" style="left:1091px;top:448px" width="9" height="7" viewBox="0 0 9 7"><path d="M1 1.5 L4.5 5 L8 1.5" fill="none" stroke="#e9eef4" stroke-width="1.6"/></svg><div class="a txt" style="left:1109px;top:446px;font-size:12.5px;font-weight:bold;color:#eef1f6"><span style="letter-spacing:-0.4px">Background</span></div>
<svg class="a" style="left:1189px;top:446px" width="12" height="12" viewBox="0 0 12 12"><circle cx="6" cy="6" r="6" fill="#8592ad"/><circle cx="6" cy="3.2" r="1" fill="#222e4a"/><rect x="5.1" y="4.9" width="1.8" height="4.6" fill="#222e4a"/><rect x="4.3" y="4.9" width="2.6" height="1" fill="#222e4a"/><rect x="4.3" y="8.7" width="3.4" height="1" fill="#222e4a"/></svg>
<div class="a txt lbl" style="left:1097px;top:491px;">Color</div>
<div class="a" style="left:1169px;top:485px;width:248px;height:26px;background:#3c4a6b;border-radius:4px"></div>
<div class="a txt" style="left:1180px;top:491px;font-size:12.5px;color:#9ea9bd">Type or select a color...</div>
<div class="a" style="left:1389px;top:490px;width:1px;height:16px;background:#7d889d"></div>
<svg class="a" style="left:1397px;top:494px" width="12" height="8" viewBox="0 0 12 8"><path d="M1 1.5 L6 6.3 L11 1.5" fill="none" stroke="#c5cdd9" stroke-width="1.2"/></svg>
<div class="a hdr" style="left:1081px;top:528px;width:344px;height:34px"></div><svg class="a" style="left:1091px;top:541px" width="9" height="7" viewBox="0 0 9 7"><path d="M1 1.5 L4.5 5 L8 1.5" fill="none" stroke="#e9eef4" stroke-width="1.6"/></svg><div class="a txt" style="left:1109px;top:539px;font-size:12.5px;font-weight:bold;color:#eef1f6">Size</div>
<svg class="a" style="left:1144px;top:539px" width="12" height="12" viewBox="0 0 12 12"><circle cx="6" cy="6" r="6" fill="#8592ad"/><circle cx="6" cy="3.2" r="1" fill="#222e4a"/><rect x="5.1" y="4.9" width="1.8" height="4.6" fill="#222e4a"/><rect x="4.3" y="4.9" width="2.6" height="1" fill="#222e4a"/><rect x="4.3" y="8.7" width="3.4" height="1" fill="#222e4a"/></svg>
<div class="a txt lbl" style="left:1097px;top:584px;">Width</div>
<div class="a inp" style="left:1169px;top:578px;width:80px;height:24px"></div><div class="a txt" style="left:1169px;width:53px;top:585px;text-align:right;font-size:12.5px;color:#aab4c4">auto</div><div class="a txt" style="left:1232px;top:585px;font-size:11px;color:#dde3ec">pt</div>
<div class="a txt lbl" style="left:1265px;top:584px;">Height</div>
<div class="a inp" style="left:1337px;top:578px;width:80px;height:24px"></div><div class="a txt" style="left:1337px;width:53px;top:585px;text-align:right;font-size:12.5px;color:#aab4c4">auto</div><div class="a txt" style="left:1400px;top:585px;font-size:11px;color:#dde3ec">pt</div>
<div class="a txt lbl" style="left:1097px;top:616px;">Min W</div>
<div class="a inp" style="left:1169px;top:610px;width:80px;height:24px"></div><div class="a txt" style="left:1169px;width:53px;top:617px;text-align:right;font-size:12.5px;color:#aab4c4">auto</div><div class="a txt" style="left:1232px;top:617px;font-size:11px;color:#dde3ec">pt</div>
<div class="a txt lbl" style="left:1265px;top:616px;">Min H</div>
<div class="a inp" style="left:1337px;top:610px;width:80px;height:24px"></div><div class="a txt" style="left:1337px;width:53px;top:617px;text-align:right;font-size:12.5px;color:#aab4c4">auto</div><div class="a txt" style="left:1400px;top:617px;font-size:11px;color:#dde3ec">pt</div>
<div class="a txt lbl" style="left:1097px;top:648px;">Max W</div>
<div class="a inp" style="left:1169px;top:642px;width:80px;height:24px"></div><div class="a txt" style="left:1169px;width:53px;top:649px;text-align:right;font-size:12.5px;color:#aab4c4">auto</div><div class="a txt" style="left:1232px;top:649px;font-size:11px;color:#dde3ec">pt</div>
<div class="a txt lbl" style="left:1265px;top:648px;">Max H</div>
<div class="a inp" style="left:1337px;top:642px;width:80px;height:24px"></div><div class="a txt" style="left:1337px;width:53px;top:649px;text-align:right;font-size:12.5px;color:#aab4c4">auto</div><div class="a txt" style="left:1400px;top:649px;font-size:11px;color:#dde3ec">pt</div>
<div class="a hdr" style="left:1081px;top:683px;width:344px;height:34px"></div><svg class="a" style="left:1091px;top:696px" width="9" height="7" viewBox="0 0 9 7"><path d="M1 1.5 L4.5 5 L8 1.5" fill="none" stroke="#e9eef4" stroke-width="1.6"/></svg><div class="a txt" style="left:1109px;top:694px;font-size:12.5px;font-weight:bold;color:#eef1f6"><span style="letter-spacing:-0.3px">Margins &amp; Padding</span></div>
<svg class="a" style="left:1227px;top:694px" width="12" height="12" viewBox="0 0 12 12"><circle cx="6" cy="6" r="6" fill="#8592ad"/><circle cx="6" cy="3.2" r="1" fill="#222e4a"/><rect x="5.1" y="4.9" width="1.8" height="4.6" fill="#222e4a"/><rect x="4.3" y="4.9" width="2.6" height="1" fill="#222e4a"/><rect x="4.3" y="8.7" width="3.4" height="1" fill="#222e4a"/></svg>
<div class="a txt" style="left:1102px;top:740px;font-size:11px;color:#dfe5ee">Margin</div>
<div class="a" style="left:1219px;top:746px;width:6px;height:6px;border-radius:3px;background:#f5b841"></div>
<div class="a inp" style="left:1229px;top:737px;width:56px;height:24px"></div>
<div class="a txt" style="left:1244px;top:743px;font-size:13px;color:#eef1f6">20</div>
<div class="a txt" style="left:1268px;top:744px;font-size:11px;color:#dde3ec">pt</div>
<div class="a" style="left:1167px;top:765px;width:180px;height:3px;background:#3c4a6b"></div>
<!-- REND -->
<div class="a" style="left:314px;top:763px;width:764px;height:5px;background:#151a29"></div>
</div></body></html>
